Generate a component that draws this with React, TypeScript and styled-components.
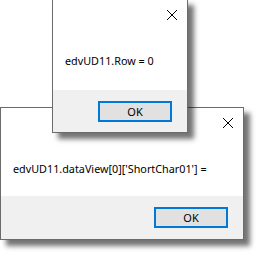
import styled, { createGlobalStyle } from "styled-components";

const GlobalStyle = createGlobalStyle`
  html, body {
    margin: 0;
    padding: 0;
    background: #ffffff;
  }
  body {
    font-family: "Noto Sans", "Open Sans", Arial, sans-serif;
  }
`;

const Desktop = styled.div`
  position: relative;
  width: 259px;
  height: 255px;
  overflow: hidden;
  background: #ffffff;
`;

const Dialog = styled.div<{ $left: number; $top: number; $width: number; $z: number }>`
  position: absolute;
  left: ${(p) => p.$left}px;
  top: ${(p) => p.$top}px;
  width: ${(p) => p.$width}px;
  z-index: ${(p) => p.$z};
  box-sizing: border-box;
  border: 1px solid #6b6b6b;
  background: #ffffff;
  box-shadow: 6px 6px 5px rgba(0, 0, 0, 0.55);
  display: flex;
  flex-direction: column;
`;

const TitleBar = styled.div`
  height: 30px;
  display: flex;
  justify-content: flex-end;
  align-items: center;
  padding-right: 9px;
`;

const CloseIcon = styled.svg`
  width: 12px;
  height: 12px;
  display: block;
`;

const Body = styled.div<{ $height: number }>`
  height: ${(p) => p.$height}px;
  padding: 23px 12px 0;
  display: flex;
  align-items: flex-start;
  font-size: 10.8px;
  color: #000000;
  line-height: 16px;
  white-space: nowrap;
  box-sizing: border-box;
`;

const Footer = styled.div<{ $height: number }>`
  height: ${(p) => p.$height}px;
  background: #f0f0f0;
  display: flex;
  justify-content: flex-end;
  align-items: center;
  padding-right: 15px;
`;

const Button = styled.button`
  width: 74px;
  height: 21px;
  box-sizing: border-box;
  border: 2px solid #0078d7;
  background: #e1e1e1;
  font-family: "Noto Sans", "Open Sans", Arial, sans-serif;
  font-size: 11px;
  color: #000000;
  padding: 0;
  line-height: 1;
  display: flex;
  align-items: center;
  justify-content: center;
`;

const Close = () => (
  <CloseIcon viewBox="0 0 12 12">
    <path d="M1 1 L11 11 M11 1 L1 11" stroke="#000" strokeWidth="1" fill="none" />
  </CloseIcon>
);

type BoxProps = {
  left: number;
  top: number;
  width: number;
  z: number;
  bodyHeight: number;
  footerHeight: number;
  text: string;
};

const MessageBox = ({ left, top, width, z, bodyHeight, footerHeight, text }: BoxProps) => (
  <Dialog $left={left} $top={top} $width={width} $z={z}>
    <TitleBar>
      <Close />
    </TitleBar>
    <Body $height={bodyHeight}>{text}</Body>
    <Footer $height={footerHeight}>
      <Button>OK</Button>
    </Footer>
  </Dialog>
);

export default function App() {
  return (
    <>
      <GlobalStyle />
      <Desktop>
        <MessageBox
          left={0}
          top={107}
          width={244}
          z={1}
          bodyHeight={58}
          footerHeight={43}
          text="edvUD11.dataView[0]['ShortChar01'] ="
        />
        <MessageBox
          left={52}
          top={-1}
          width={136}
          z={2}
          bodyHeight={60}
          footerHeight={42}
          text="edvUD11.Row = 0"
        />
      </Desktop>
    </>
  );
}
